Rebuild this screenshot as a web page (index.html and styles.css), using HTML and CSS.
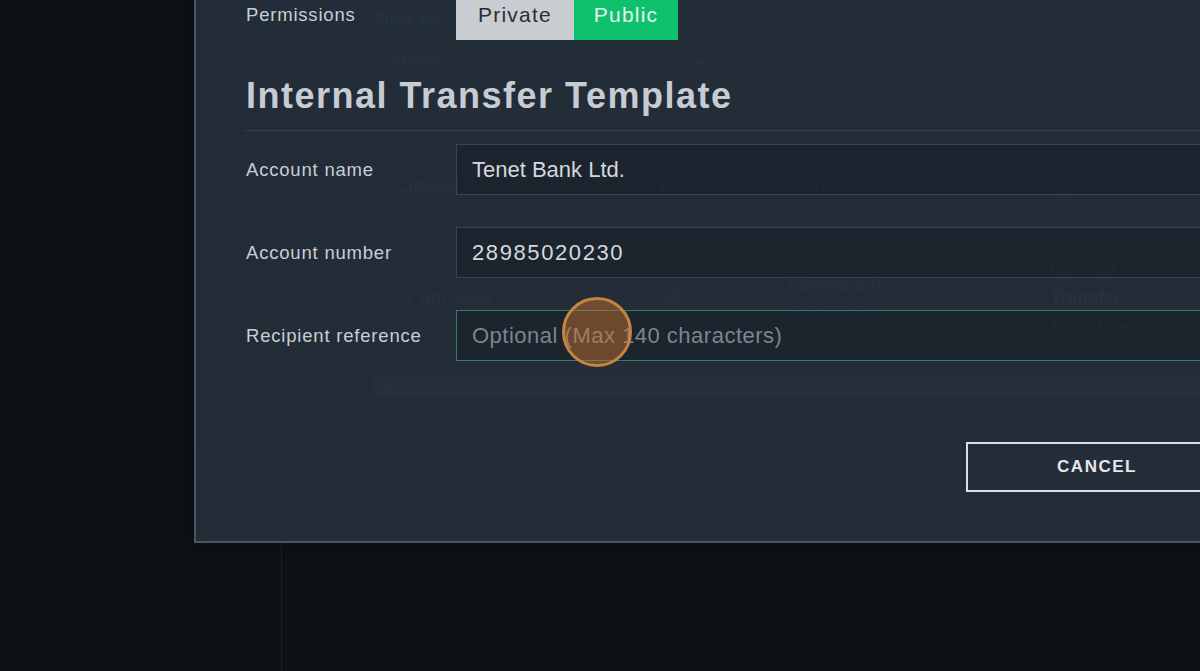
FILE: index.html
```html
<!DOCTYPE html>
<html lang="en">
<head>
<meta charset="utf-8">
<title>Internal Transfer Template</title>
<link rel="stylesheet" href="styles.css">
</head>
<body>
<div class="page">
  <aside class="sidebar"></aside>
  <main class="main">
    <div class="filter-label">Filter by</div>
    <div class="select">
      <span>Active</span>
      <svg class="chevron" width="14" height="9" viewBox="0 0 14 9"><path d="M1 1.5 L7 7.5 L13 1.5" fill="none" stroke="currentColor" stroke-width="2"/></svg>
    </div>
    <div class="grid">
      <div class="grid-head">
        <div>Created</div>
        <div>ID</div>
        <div>Name</div>
        <div>Type</div>
      </div>
      <div class="grid-row">
        <div>07 Apr 2025</div>
        <div>48</div>
        <div class="name-cell"><span>Silverwoods</span><span class="sub">Investments Ltd</span></div>
        <div class="type-cell">Internal Transfer Template</div>
      </div>
    </div>
    <div class="scrollbar"><span class="scroll-thumb"></span></div>
  </main>
</div>

<section class="modal">
  <div class="perm-row">
    <span class="label">Permissions</span>
    <div class="toggle">
      <button class="seg seg-private">Private</button>
      <button class="seg seg-public">Public</button>
    </div>
  </div>
  <h1 class="title">Internal Transfer Template</h1>
  <form class="form">
    <label class="row">
      <span class="label">Account name</span>
      <input class="field" type="text" value="Tenet Bank Ltd.">
    </label>
    <label class="row">
      <span class="label">Account number</span>
      <input class="field field-num" type="text" value="28985020230">
    </label>
    <label class="row">
      <span class="label">Recipient reference</span>
      <input class="field field-active" type="text" placeholder="Optional (Max 140 characters)">
    </label>
  </form>
  <div class="footer">
    <button class="btn-cancel">CANCEL</button>
  </div>
</section>

<div class="cursor"></div>
</body>
</html>
```

FILE: styles.css
```css
* { box-sizing: border-box; }

html, body {
  margin: 0;
  height: 100%;
}

body {
  background: #0f1215;
  font-family: "Liberation Sans", Arial, sans-serif;
  overflow: hidden;
  position: relative;
}

/* underlying page (seen through the translucent modal) */
.page {
  display: flex;
  height: 100%;
}

.sidebar {
  width: 282px;
  border-right: 1px solid #1d2227;
  flex: none;
}

.main {
  flex: 1;
  padding: 10px 0 0 92px;
  color: #47515b;
  font-size: 18px;
}

.filter-label {
  line-height: 20px;
}

.select {
  margin-top: 10px;
  width: 346px;
  height: 40px;
  padding: 0 14px 0 16px;
  display: flex;
  align-items: center;
  justify-content: space-between;
}

.chevron { color: #47515b; }

.grid {
  margin-top: 85px;
  padding-left: 21px;
}

.grid-head,
.grid-row {
  display: grid;
  grid-template-columns: 265px 127px 263px 110px;
}

.grid-head {
  height: 55px;
  padding-top: 10px;
  line-height: 22px;
}

.grid-row {
  height: 157px;
  align-items: center;
}

.name-cell {
  display: flex;
  flex-direction: column;
  gap: 8px;
}

.name-cell .sub {
  font-size: 14px;
}

.type-cell {
  font-weight: bold;
  line-height: 28.5px;
}

.scrollbar {
  height: 20px;
  background: #3b444e;
  display: flex;
  align-items: center;
  padding-left: 12px;
}

.scroll-thumb {
  width: 4px;
  height: 10px;
  background: #4c5661;
}

/* modal */
.modal {
  position: absolute;
  left: 194px;
  top: -42px;
  width: 1086px;
  padding: 30px 50px 49px 50px;
  border: 2px solid #4a5560;
  background: linear-gradient(rgba(35, 47, 59, 0.93), rgba(37, 46, 58, 0.93));
  box-shadow: 0 4px 14px rgba(0, 0, 0, 0.4);
}

.label {
  width: 210px;
  flex: none;
  font-size: 18.5px;
  letter-spacing: 0.8px;
  color: #c9ced3;
}

.perm-row {
  display: flex;
  align-items: center;
}

.toggle {
  display: flex;
}

.seg {
  height: 50px;
  border: none;
  font-family: "Liberation Sans", Arial, sans-serif;
  font-size: 21px;
  letter-spacing: 1.2px;
  padding: 0;
  cursor: pointer;
}

.seg-private {
  width: 118px;
  background: #c9cdd1;
  color: #2a2f35;
}

.seg-public {
  width: 104px;
  background: #0fc16d;
  color: #e2f6eb;
}

.title {
  margin: 34px 0 0;
  padding-bottom: 12px;
  border-bottom: 1px solid #37424d;
  font-size: 36px;
  line-height: 44px;
  font-weight: bold;
  letter-spacing: 1.5px;
  color: #c6ccd2;
}

.form {
  margin-top: 13px;
  display: flex;
  flex-direction: column;
  gap: 32px;
}

.row {
  display: flex;
  align-items: center;
}

.field {
  flex: 1;
  height: 51px;
  border: 1px solid #3a4551;
  background: rgba(14, 20, 28, 0.33);
  padding: 0 15px;
  font-family: "Liberation Sans", Arial, sans-serif;
  font-size: 22px;
  color: #d4d8dd;
  outline: none;
}

.field-num {
  letter-spacing: 1.6px;
}

.field-active {
  border-color: #2f7f66;
}

.field::placeholder {
  color: #7b858f;
  letter-spacing: 0.5px;
}

.footer {
  margin-top: 81px;
  display: flex;
  justify-content: flex-end;
}

.btn-cancel {
  width: 262px;
  height: 50px;
  background: transparent;
  border: 2px solid #dadfe3;
  color: #e3e6ea;
  font-family: "Liberation Sans", Arial, sans-serif;
  font-weight: bold;
  font-size: 17px;
  letter-spacing: 1.5px;
  cursor: pointer;
}

/* click indicator overlay */
.cursor {
  position: absolute;
  left: 562px;
  top: 297px;
  width: 70px;
  height: 70px;
  border-radius: 50%;
  border: 3px solid #c7843f;
  background: rgba(200, 115, 45, 0.47);
}
```
